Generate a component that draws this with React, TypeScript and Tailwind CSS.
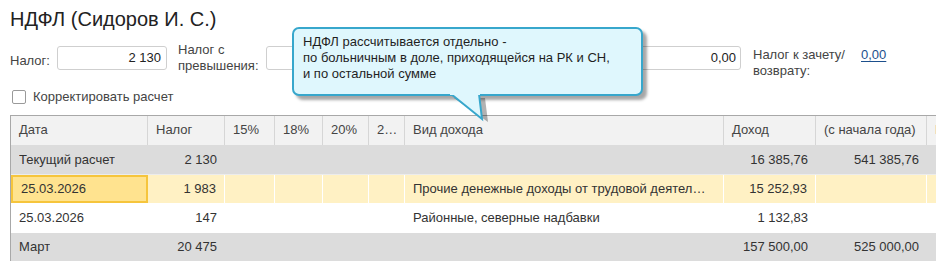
import React from 'react';

const font = { fontFamily: '"Liberation Sans", Arial, sans-serif' };

// column widths of the grid (last column is cut off by the window)
const cols = 'grid-cols-[137px_77px_50px_48px_46px_36px_319px_92px_111px_60px]';

type Row = {
  kind: 'group' | 'plain' | 'selected';
  cells: string[];
};

const rows: Row[] = [
  { kind: 'group', cells: ['Текущий расчет', '2 130', '', '', '', '', '', '16 385,76', '541 385,76', ''] },
  { kind: 'selected', cells: ['25.03.2026', '1 983', '', '', '', '', 'Прочие денежные доходы от трудовой деятел…', '15 252,93', '', ''] },
  { kind: 'plain', cells: ['25.03.2026', '147', '', '', '', '', 'Районные, северные надбавки', '1 132,83', '', ''] },
  { kind: 'group', cells: ['Март', '20 475', '', '', '', '', '', '157 500,00', '525 000,00', ''] },
];

const headers = ['Дата', 'Налог', '15%', '18%', '20%', '2…', 'Вид дохода', 'Доход', '(с начала года)', 'Н'];
const rightAligned = [false, true, true, true, true, true, false, true, true, true];

function Tooltip() {
  return (
    <div className="absolute left-[292px] top-[27px] z-10">
      <div className="relative w-[351px] h-[69px] rounded-[7px] border-2 border-[#37a7cc] bg-[#dff7fd] shadow-[4px_4px_3px_rgba(0,0,0,0.35)] px-[9px] pt-[5px] text-[13px] leading-[16px] text-[#1f1f1f]">
        <div>НДФЛ рассчитывается отдельно -</div>
        <div>по больничным в доле, приходящейся на РК и СН,</div>
        <div>и по остальной сумме</div>
      </div>
      <svg className="absolute left-[158px] top-[64px]" width="40" height="36" viewBox="0 0 40 36">
        <polygon points="4,7 38,31 35,7" fill="rgba(0,0,0,0.3)" />
        <polygon points="1,3 32,28 29,3" fill="#dff7fd" stroke="#37a7cc" strokeWidth="2" strokeLinejoin="miter" />
        <rect x="0" y="0" width="30" height="4" fill="#dff7fd" />
      </svg>
    </div>
  );
}

export default function App() {
  return (
    <div className="relative w-[936px] h-[261px] overflow-hidden bg-white text-[13px] text-[#333]" style={font}>
      <h1 className="pl-[10px] pt-[6px] text-[20px] leading-[26px] text-[#222]">НДФЛ (Сидоров И. С.)</h1>

      <div className="mt-[14px] flex items-start pl-[10px]">
        <div className="pt-[5px] w-[47px] text-[#444]">Налог:</div>
        <div className="h-[24px] w-[110px] rounded-[3px] border border-[#cfcfcf] px-[5px] text-right leading-[22px] text-[#222]">2 130</div>
        <div className="ml-[11px] w-[88px] leading-[16px] text-[#444] -mt-[4px]">Налог с превышения:</div>
        <div className="h-[24px] w-[475px] rounded-[3px] border border-[#cfcfcf] px-[4px] text-right leading-[22px] text-[#222]">0,00</div>
        <div className="ml-[12px] w-[100px] leading-[16px] text-[#444] mt-[1px]">Налог к зачету/ возврату:</div>
        <a className="ml-[8px] mt-[1px] leading-[16px] text-[#1c4f8c] underline underline-offset-2">0,00</a>
      </div>

      <label className="mt-[8px] flex items-center gap-[7px] pl-[12px] text-[#444]">
        <span className="h-[14px] w-[14px] rounded-[2px] border border-[#9a9a9a] bg-white" />
        Корректировать расчет
      </label>

      <div className="ml-[10px] mt-[8px] w-[1000px] border-l border-t border-[#a8a8a8]">
        <div className={`grid ${cols} h-[30px] bg-[#f2f2f2] border-b border-[#dcdcdc]`}>
          {headers.map((h, i) => (
            <div key={i} className="flex items-center border-r border-[#d6d6d6] px-[8px] text-[#444] whitespace-nowrap overflow-hidden">
              {h}
            </div>
          ))}
        </div>
        {rows.map((r, ri) => (
          <div
            key={ri}
            className={`grid ${cols} h-[29px] border-b ${
              r.kind === 'group' ? 'bg-[#dcdcdc] border-[#ececec]' : r.kind === 'selected' ? 'bg-[#fff1c4] border-white' : 'bg-white border-white'
            }`}
          >
            {r.cells.map((c, ci) => {
              const active = r.kind === 'selected' && ci === 0;
              return (
                <div
                  key={ci}
                  className={`flex min-w-0 items-center px-[8px] whitespace-nowrap ${
                    rightAligned[ci] ? 'justify-end' : ''
                  } ${active ? 'bg-[#ffe38f] border-2 border-[#f6c53c] px-[6px]' : r.kind === 'selected' ? 'border-r border-white' : ''} text-[#333]`}
                >
                  <span className="block min-w-0 truncate">{c}</span>
                </div>
              );
            })}
          </div>
        ))}
      </div>

      <Tooltip />
    </div>
  );
}
